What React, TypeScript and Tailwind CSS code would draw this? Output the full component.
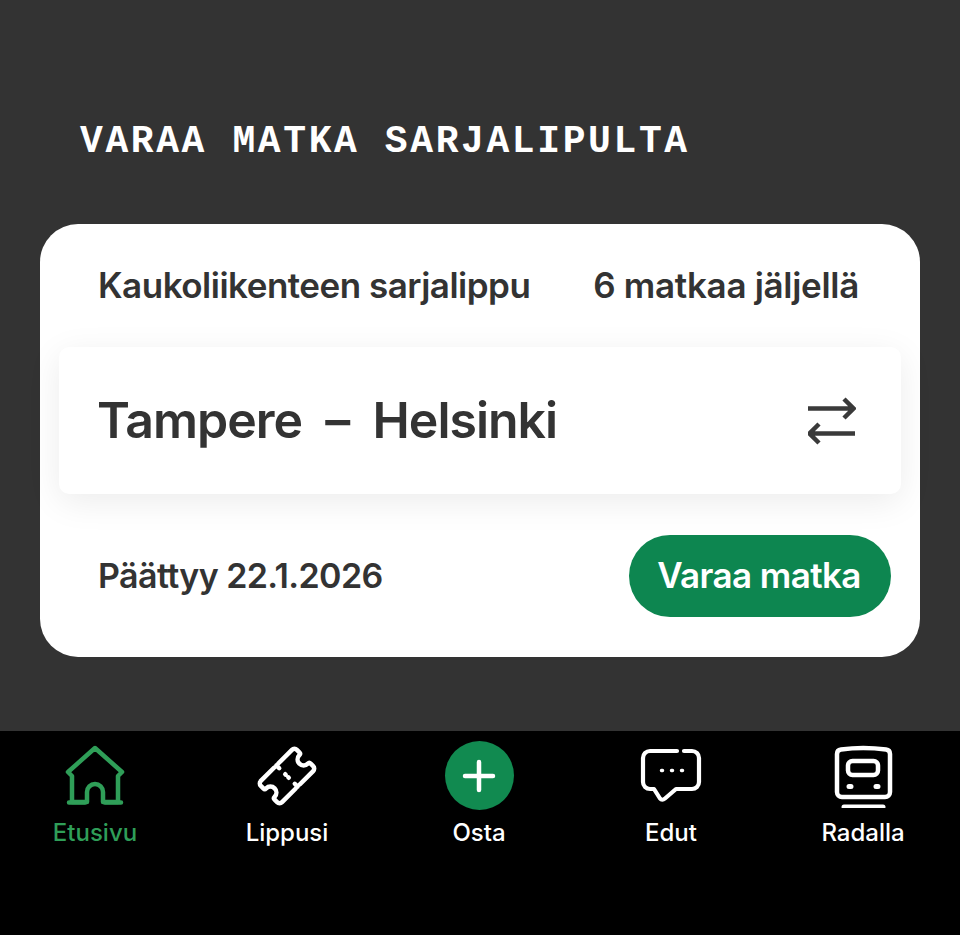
import React from "react";

const Home = () => (
  <svg width="64" height="64" viewBox="0 0 64 64" fill="none" stroke="#2f9e58" strokeWidth="4.5" strokeLinecap="round" strokeLinejoin="round">
    <path d="M9 32 L5 28 L32 4 L59 28 L55 32 V58 H40 V48 A8 8 0 0 0 24 48 V58 H9 Z" />
    <path d="M6 58.5 H22 M42 58.5 H58" />
  </svg>
);

const Ticket = () => (
  <svg width="64" height="64" viewBox="-32 -32 64 64" fill="none" stroke="#fff" strokeWidth="4.5" strokeLinecap="round" strokeLinejoin="round">
    <g transform="translate(0 0) rotate(-45)">
      <path d="M-22 -15 H-3 M3 -15 H22 A3.5 3.5 0 0 1 25.5 -11.5 V-8 Q25.5 -6 23.5 -6 A6 6 0 0 0 23.5 6 Q25.5 6 25.5 8 V11.5 A3.5 3.5 0 0 1 22 15 H3 M-3 15 H-22 A3.5 3.5 0 0 1 -25.5 11.5 V8 Q-25.5 6 -23.5 6 A6 6 0 0 0 -23.5 -6 Q-25.5 -6 -25.5 -8 V-11.5 A3.5 3.5 0 0 1 -22 -15" />
      <path d="M0 -15 V-11 M0 15 V11 M0 -2.5 V-2 M0 2 V2.5" />
    </g>
  </svg>
);

const Chat = () => (
  <svg width="64" height="64" viewBox="0 0 64 64" fill="none" stroke="#fff" strokeWidth="4.2" strokeLinecap="round" strokeLinejoin="round">
    <path d="M38 7 H11 A7 7 0 0 0 4 14 V38 A7 7 0 0 0 11 45 H15 L21 54.5 Q23 57 26 54.5 L37 45 H53 A7 7 0 0 0 60 38 V14 A7 7 0 0 0 53 7 H45" />
    <path d="M22.5 26.5 H23.5 M32.5 26.5 H33.5 M42.5 26.5 H43.5" strokeWidth="3.5" />
  </svg>
);

const Train = () => (
  <svg width="64" height="64" viewBox="0 0 64 64" fill="none" stroke="#fff" strokeWidth="4.5" strokeLinecap="round" strokeLinejoin="round">
    <path d="M6 10 Q6 6 10 5.5 Q32 2.5 55 5.5 Q59 6 59 10 V48 A5 5 0 0 1 54 53 H11 A5 5 0 0 1 6 48 Z" />
    <rect x="17" y="17" width="30" height="14" rx="4.5" />
    <path d="M18 42.5 H20 M45 42.5 H47" strokeWidth="5" />
    <path d="M13 63 H52" strokeWidth="5" />
  </svg>
);

const Swap = () => (
  <svg width="48" height="48" viewBox="0 0 48 48" fill="none" stroke="#3a3a3a" strokeWidth="4.5" strokeLinejoin="miter">
    <path d="M0 11.5 H45 M36 2 L45.5 11.5 L36 21" />
    <path d="M47 36.5 H2 M11 27 L1.5 36.5 L11 46" />
  </svg>
);

const items = [
  { label: "Etusivu", color: "text-[#2f9e58]", icon: <Home /> },
  { label: "Lippusi", color: "text-white", icon: <Ticket /> },
  {
    label: "Osta",
    color: "text-white",
    icon: (
      <div className="w-[69px] h-[69px] rounded-full bg-[#118a50] flex items-center justify-center">
        <svg width="34" height="34" viewBox="0 0 34 34" stroke="#fff" strokeWidth="4.5" strokeLinecap="round">
          <path d="M17 3 V31 M3 17 H31" />
        </svg>
      </div>
    ),
  },
  { label: "Edut", color: "text-white", icon: <Chat /> },
  { label: "Radalla", color: "text-white", icon: <Train /> },
];

export default function App() {
  return (
    <div className="h-[935px] w-[960px] flex flex-col bg-[#333333] font-['Inter','Liberation_Sans',sans-serif] overflow-hidden">
      <main className="flex-1 flex flex-col px-10">
        <h1 className="mt-[118px] ml-10 h-[48px] leading-[48px] text-[38px] font-bold text-white font-['Liberation_Mono',monospace] tracking-[2.6px] whitespace-nowrap">
          VARAA MATKA SARJALIPULTA
        </h1>
        <section className="mt-[58px] h-[433px] rounded-[38px] bg-white flex flex-col text-[#333333]">
          <div className="h-[122px] shrink-0 pl-[58px] pr-[61px] flex items-center justify-between text-[35px] font-semibold">
            <span className="tracking-[-0.5px]">Kaukoliikenteen sarjalippu</span>
            <span className="tracking-[-0.3px]">6 matkaa jäljellä</span>
          </div>
          <div className="mt-px mx-[19px] h-[147px] shrink-0 pl-[38px] pr-[45px] rounded-[10px] bg-white shadow-[0_8px_34px_rgba(0,0,0,0.08)] flex items-center justify-between">
            <span className="text-[50px] font-semibold tracking-[-1px] whitespace-pre">Tampere  –  Helsinki</span>
            <Swap />
          </div>
          <div className="flex-1 pl-[58px] pr-[29px] flex items-center justify-between">
            <span className="text-[34px] font-semibold tracking-[-0.6px]">Päättyy 22.1.2026</span>
            <button className="w-[262px] h-[82px] pr-[2px] rounded-full bg-[#0d8650] text-white text-[35px] font-semibold tracking-[-0.6px]">
              Varaa matka
            </button>
          </div>
        </section>
      </main>
      <nav className="h-[204px] shrink-0 bg-black grid grid-cols-5 items-start pt-[10px]">
        {items.map((it) => (
          <div key={it.label} className="mr-[2px] flex flex-col items-center">
            <div className="h-[69px] flex items-center justify-center">{it.icon}</div>
            <span className={`mt-[8px] text-[24px] font-medium leading-[30px] ${it.color}`}>{it.label}</span>
          </div>
        ))}
      </nav>
    </div>
  );
}
